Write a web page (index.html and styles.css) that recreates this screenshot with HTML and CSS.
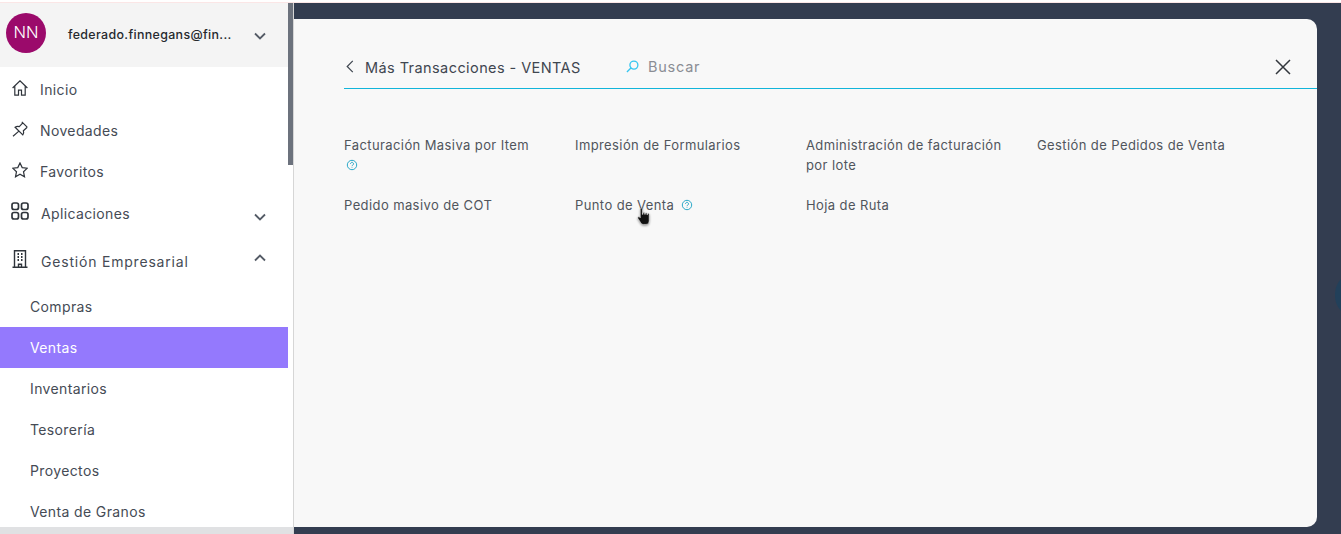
FILE: index.html
```html
<!DOCTYPE html>
<html lang="es">
<head>
    <meta charset="UTF-8">
    <title>Más Transacciones - VENTAS</title>
    <link rel="stylesheet" href="styles.css">
</head>
<body>
    <div class="top-strip"></div>
    <div class="app">
        <aside class="sidebar">
            <div class="sidebar-scroll">
                <div class="sidebar-content">
                    <div class="user-box">
                        <div class="avatar">NN</div>
                        <div class="user-mail">federado.finnegans@fin...</div>
                        <svg class="chevron" viewBox="0 0 12 8"><path d="M1 1.500l5 5 5-5"/></svg>
                    </div>
                    <nav class="menu">
                        <a class="menu-item">
                            <svg class="menu-icon" viewBox="0 0 16 16"><path d="M.6 8L8 .8 15.400 8M2.800 6v9.200h3.700v-5h3v5h3.700V6"/></svg>
                            <span>Inicio</span>
                        </a>
                        <a class="menu-item">
                            <svg class="menu-icon" viewBox="0 0 16 16"><path d="M9.800.8l5.400 5.400M10.800 1.800L7.300 5.600c-1.500-.5-3-.3-4.200.6l7.700 7.700c.9-1.200 1.100-2.700.6-4.200l3.800-3.500M6.900 10.100L1 15.200"/></svg>
                            <span>Novedades</span>
                        </a>
                        <a class="menu-item">
                            <svg class="menu-icon" viewBox="0 0 16 16"><path d="M8 .9l2.200 4.700 5.100.6-3.800 3.500 1 5.100L8 12.300l-4.500 2.500 1-5.100L.7 6.200l5.100-.6z"/></svg>
                            <span>Favoritos</span>
                        </a>
                        <a class="menu-item menu-item-app">
                            <svg class="menu-icon icon-grid" viewBox="0 0 18 18">
                                <rect x="1" y="1" width="6.500" height="6.500" rx="2"/>
                                <rect x="10.500" y="1" width="6.500" height="6.500" rx="2"/>
                                <rect x="1" y="10.500" width="6.500" height="6.500" rx="2"/>
                                <rect x="10.500" y="10.500" width="6.500" height="6.500" rx="2"/>
                            </svg>
                            <span>Aplicaciones</span>
                            <svg class="chevron" viewBox="0 0 12 8"><path d="M1 1.500l5 5 5-5"/></svg>
                        </a>
                        <a class="menu-item menu-item-group">
                            <svg class="menu-icon icon-building" viewBox="0 0 16 18">
                                <path d="M.5 17.300h15M2.500 17.300V.8h11v16.500M6.500 17.300v-3h3v3"/>
                                <path class="windows" d="M5.500 4h1.500M9 4h1.500M5.500 7h1.500M9 7h1.500M5.500 10h1.500M9 10h1.500"/>
                            </svg>
                            <span>Gestión Empresarial</span>
                            <svg class="chevron chevron-up" viewBox="0 0 12 8"><path d="M1 6.500l5-5 5 5"/></svg>
                        </a>
                        <a class="submenu-item">Compras</a>
                        <a class="submenu-item active">Ventas</a>
                        <a class="submenu-item">Inventarios</a>
                        <a class="submenu-item">Tesorería</a>
                        <a class="submenu-item">Proyectos</a>
                        <a class="submenu-item">Venta de Granos</a>
                    </nav>
                </div>
                <div class="scrollbar"><div class="scrollbar-thumb"></div></div>
            </div>
            <div class="scrollbar-bottom"></div>
        </aside>

        <main class="main">
            <div class="blob"></div>
            <section class="modal">
                <header class="modal-header">
                    <svg class="back-icon" viewBox="0 0 8 14"><path d="M7 1L1 7l6 6"/></svg>
                    <h1 class="modal-title">Más Transacciones - VENTAS</h1>
                    <div class="search">
                        <svg class="search-icon" viewBox="0 0 14 14"><circle cx="8.500" cy="5.500" r="4.300"/><path d="M5.300 8.700L1 13"/></svg>
                        <span>Buscar</span>
                    </div>
                    <svg class="close-icon" viewBox="0 0 16 16"><path d="M1 1l14 14M15 1L1 15"/></svg>
                </header>
                <div class="transactions">
                    <a class="transaction">Facturación Masiva por Item
                        <svg class="help-icon help-block" viewBox="0 0 12 12"><circle cx="6" cy="6" r="4.700"/><path d="M4.500 4.800a1.500 1.500 0 1 1 2.300 1.300c-.6.3-.8.6-.8 1.100M6 8.300v.6"/></svg>
                    </a>
                    <a class="transaction">Impresión de Formularios</a>
                    <a class="transaction">Administración de facturación por lote</a>
                    <a class="transaction">Gestión de Pedidos de Venta</a>
                    <a class="transaction">Pedido masivo de COT</a>
                    <a class="transaction">Punto de Venta
                        <svg class="help-icon" viewBox="0 0 12 12"><circle cx="6" cy="6" r="4.700"/><path d="M4.500 4.800a1.500 1.500 0 1 1 2.300 1.300c-.6.3-.8.6-.8 1.100M6 8.300v.6"/></svg>
                    </a>
                    <a class="transaction">Hoja de Ruta</a>
                </div>
            </section>
            <svg class="cursor" viewBox="0 0 14 17">
                <path d="M3 1c0-1.300 2-1.300 2 0v5h.6V4.800c0-1 1.600-1 1.600 0V6h.5V5.200c0-1 1.600-1 1.600 0V6.300h.5V5.800c0-1 1.600-1 1.600 0V12c0 2-1 3.500-3 3.500H6c-1.200 0-2-.6-2.600-1.600L.8 9.800c-.6-1.200.8-2 1.700-1.200l.5.6z"/>
            </svg>
        </main>
    </div>
</body>
</html>
```
FILE: styles.css
```css
* {
    box-sizing: border-box;
}
html, body {
    height: 100%;
}
body {
    margin: 0;
    display: flex;
    flex-direction: column;
    overflow: hidden;
    font-family: Inter, "Open Sans", sans-serif;
    color: #454b55;
    background-color: #333d50;
}
a {
    color: inherit;
    text-decoration: none;
}
svg {
    fill: none;
    stroke: currentColor;
    flex-shrink: 0;
}
.top-strip {
    height: 3px;
    background: linear-gradient(#fff 0, #fff 2px, #fbe6e6 2px);
}
.app {
    flex: 1;
    display: flex;
    min-height: 0;
}

/* sidebar */
.sidebar {
    width: 294px;
    display: flex;
    flex-direction: column;
    background-color: #fff;
    border-right: 1px solid #d6d6d6;
}
.sidebar-scroll {
    flex: 1;
    display: flex;
    min-height: 0;
    overflow: hidden;
}
.sidebar-content {
    width: 288px;
}
.scrollbar {
    width: 5px;
    background-color: #fff;
}
.scrollbar-thumb {
    height: 162px;
    background-color: #6c727d;
}
.scrollbar-bottom {
    height: 7px;
    background-color: #e0e1e3;
}
.user-box {
    height: 64px;
    display: flex;
    align-items: center;
    padding: 0 22px 4px 6px;
    background-color: #f4f4f4;
}
.avatar {
    width: 40px;
    height: 40px;
    border-radius: 50%;
    background-color: #9b0a6b;
    color: #fff;
    font-size: 16.500px;
    font-weight: 300;
    line-height: 38px;
    text-align: center;
}
.user-mail {
    flex: 1;
    margin: 2px 0 0 22px;
    font-size: 12.400px;
    font-weight: 500;
    letter-spacing: 0.35px;
    color: #26292e;
    white-space: nowrap;
}
.chevron {
    width: 12px;
    height: 8px;
    stroke-width: 1.800;
    color: #545b66;
}
.user-box .chevron {
    margin-top: 6px;
}
.menu-item {
    height: 41px;
    display: flex;
    align-items: center;
    padding: 4px 22px 0 12px;
    font-size: 14px;
    letter-spacing: 0.37px;
}
.menu-item span {
    flex: 1;
    margin-left: 12px;
}
.menu-item > .menu-icon {
    margin-top: -4px;
}
.menu-icon {
    width: 16px;
    height: 16px;
    stroke-width: 1.200;
    color: #2f343b;
}
.menu-item-app {
    height: 42px;
    padding-left: 11px;
}
.menu-item-app span {
    margin-left: 12px;
}
.menu-item-app .chevron {
    margin-top: 7px;
}
.icon-grid {
    width: 18px;
    height: 18px;
    stroke-width: 1.700;
}
.menu-item-group {
    height: 54px;
    padding-left: 12px;
    letter-spacing: 0.8px;
}
.menu-item-group span {
    margin-left: 13px;
}
.menu-item-group .chevron {
    margin-top: -6px;
}
.icon-building {
    width: 16px;
    height: 18px;
    stroke-width: 1.400;
}
.windows {
    stroke-width: 1.800;
}
.submenu-item {
    height: 41px;
    display: flex;
    align-items: center;
    padding-left: 30px;
    font-size: 14px;
    letter-spacing: 0.37px;
}
.submenu-item.active {
    background-color: #9479fd;
    color: #fff;
}

/* modal */
.main {
    flex: 1;
    position: relative;
    overflow: hidden;
    padding: 16px 24px 7px 0;
    display: flex;
}
.modal {
    flex: 1;
    padding: 0 0 0 50px;
    background-color: #f8f8f8;
    border-radius: 0 10px 10px 0;
}
.modal-header {
    height: 70px;
    display: flex;
    align-items: center;
    padding: 26px 26px 0 2px;
    border-bottom: 1px solid #12b5da;
}
.back-icon {
    width: 8px;
    height: 13px;
    stroke-width: 1.300;
    color: #3f4650;
}
.modal-title {
    margin: 2px 0 0 11px;
    width: 261px;
    font-size: 14.500px;
    font-weight: 400;
    letter-spacing: 0.42px;
    color: #3f4650;
    white-space: nowrap;
}
.search {
    flex: 1;
    display: flex;
    align-items: center;
    gap: 9px;
    font-size: 14.500px;
    letter-spacing: 0.75px;
    color: #8a8d94;
}
.search-icon {
    width: 13px;
    height: 13px;
    stroke-width: 1.400;
    color: #35c6f0;
}
.close-icon {
    width: 16px;
    height: 16px;
    stroke-width: 1.500;
    color: #33373d;
}
.transactions {
    display: grid;
    grid-template-columns: repeat(4, 231px);
    grid-auto-rows: auto;
    row-gap: 20px;
    padding-top: 46px;
}
.transaction {
    display: block;
    width: 205px;
    font-size: 13px;
    line-height: 20px;
    letter-spacing: 0.4px;
    color: #50555c;
}
.help-icon {
    width: 12px;
    height: 12px;
    margin-left: 3px;
    vertical-align: -1px;
    stroke-width: 1;
    color: #2ba9c9;
}
.help-block {
    display: block;
    margin: 4px 0 0 2px;
}

/* things lying over the page */
.blob {
    position: absolute;
    right: -18px;
    top: 274px;
    width: 24px;
    height: 36px;
    border-radius: 50%;
    background-color: #22405a;
}
.cursor {
    position: absolute;
    left: 343px;
    top: 205px;
    width: 15px;
    height: 18px;
    fill: #111;
    stroke: #fff;
    stroke-width: 0.500;
    filter: drop-shadow(0 1px 1px rgba(0, 0, 0, 0.4));
}
```
